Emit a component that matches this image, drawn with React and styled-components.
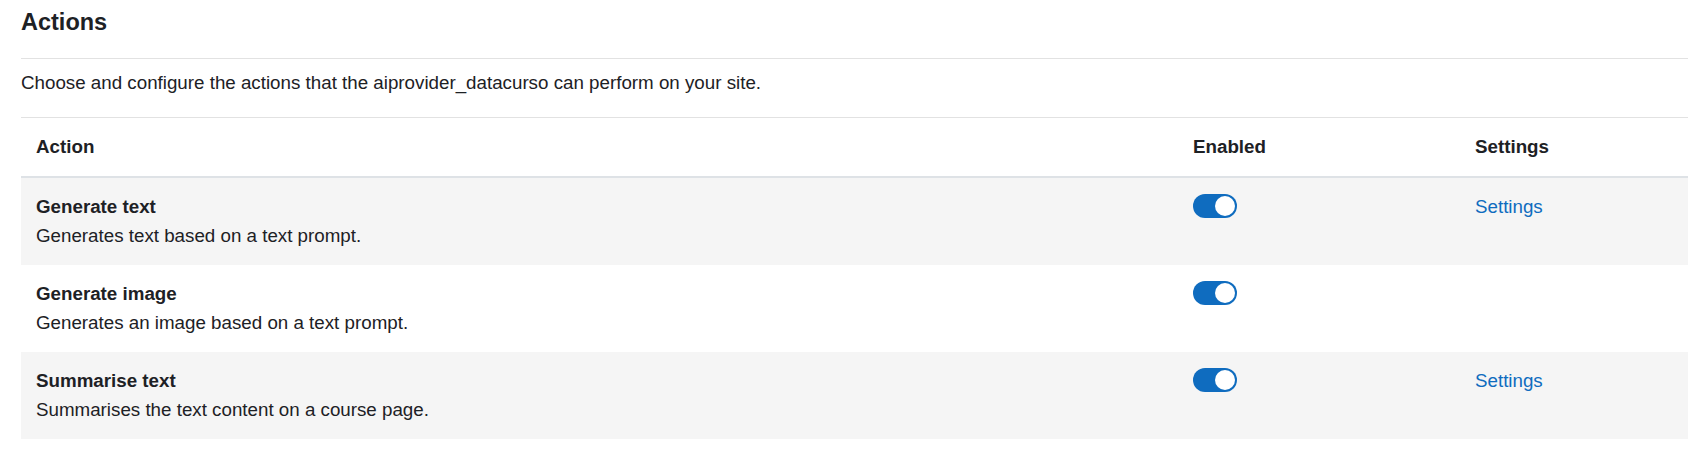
import React from "react";
import styled, { createGlobalStyle } from "styled-components";

const GlobalStyle = createGlobalStyle`
  html, body {
    margin: 0;
    padding: 0;
    background: #ffffff;
  }
  body {
    font-family: "Liberation Sans", Arial, sans-serif;
    font-size: 18.75px;
    line-height: 28.5px;
    color: #1d2125;
    overflow: hidden;
  }
`;

const actions = [
  {
    name: "Generate text",
    description: "Generates text based on a text prompt.",
    enabled: true,
    settings: true,
  },
  {
    name: "Generate image",
    description: "Generates an image based on a text prompt.",
    enabled: true,
    settings: false,
  },
  {
    name: "Summarise text",
    description: "Summarises the text content on a course page.",
    enabled: true,
    settings: true,
  },
];

const Page = () => {
  return (
    <Wrapper>
      <GlobalStyle />
      <Heading>Actions</Heading>
      <Rule />
      <Intro>
        Choose and configure the actions that the aiprovider_datacurso can
        perform on your site.
      </Intro>
      <Table>
        <thead>
          <tr>
            <HeadCell $width="1157px">Action</HeadCell>
            <HeadCell $width="282px">Enabled</HeadCell>
            <HeadCell>Settings</HeadCell>
          </tr>
        </thead>
        <tbody>
          {actions.map((action, i) => (
            <Row key={action.name} $striped={i % 2 === 0}>
              <Cell>
                <ActionName>{action.name}</ActionName>
                <ActionDesc>{action.description}</ActionDesc>
              </Cell>
              <Cell>
                <Toggle $on={action.enabled} aria-label={action.name}>
                  <Knob />
                </Toggle>
              </Cell>
              <Cell>{action.settings && <SettingsLink href="#">Settings</SettingsLink>}</Cell>
            </Row>
          ))}
        </tbody>
      </Table>
    </Wrapper>
  );
};

const Wrapper = styled.div`
  padding: 0 0 0 21px;
  width: 1667px;
`;

const Heading = styled.h3`
  margin: 0;
  padding-top: 8px;
  font-size: 23.5px;
  line-height: 29px;
  font-weight: 700;
  color: #1d2125;
`;

const Rule = styled.hr`
  margin: 21px 0 0;
  border: 0;
  border-top: 1px solid #e2e2e2;
`;

const Intro = styled.p`
  margin: 10px 0 19px;
`;

const Table = styled.table`
  width: 100%;
  border-collapse: collapse;
  table-layout: fixed;
`;

const HeadCell = styled.th`
  box-sizing: border-box;
  width: ${(p) => p.$width || "auto"};
  text-align: left;
  font-weight: 700;
  padding: 15px 15px;
  border-top: 1px solid #e2e2e2;
  border-bottom: 2px solid #dee2e6;
  vertical-align: top;
`;

const Row = styled.tr`
  background: ${(p) => (p.$striped ? "#f5f5f5" : "#ffffff")};
  & + & td {
    border-top: 1px solid #e2e2e2;
  }
`;

const Cell = styled.td`
  padding: 15px 15px;
  vertical-align: top;
`;

const ActionName = styled.div`
  font-weight: 700;
`;

const ActionDesc = styled.div``;

const Toggle = styled.span`
  display: flex;
  justify-content: ${(p) => (p.$on ? "flex-end" : "flex-start")};
  align-items: center;
  box-sizing: border-box;
  width: 44px;
  height: 24px;
  margin-top: 1px;
  padding: 2px;
  border-radius: 12px;
  background: ${(p) => (p.$on ? "#0f6cbf" : "#ffffff")};
`;

const Knob = styled.span`
  width: 20px;
  height: 20px;
  border-radius: 50%;
  background: #ffffff;
`;

const SettingsLink = styled.a`
  color: #0f6cbf;
  text-decoration: none;
`;

export default function App() {
  return <Page />;
}
